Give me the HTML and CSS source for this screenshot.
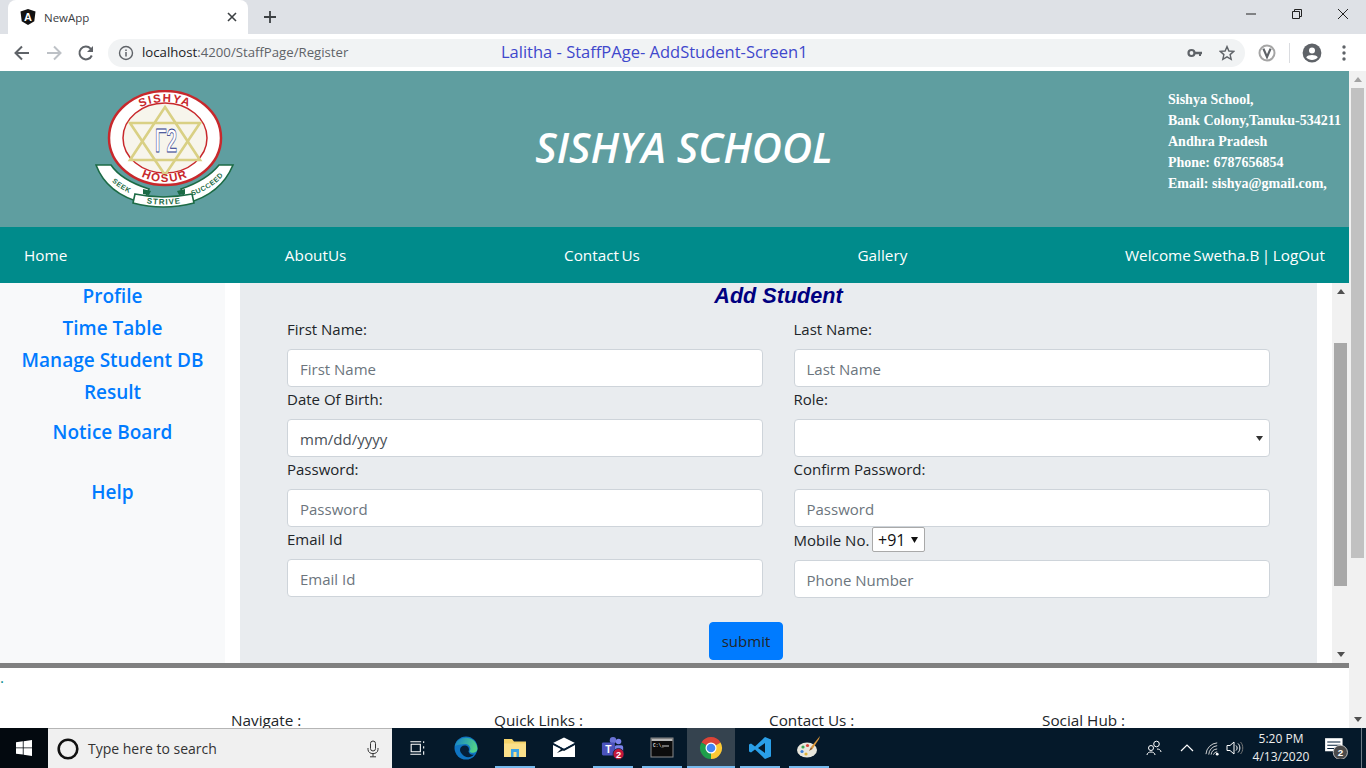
FILE: index.html
```html
<!DOCTYPE html>
<html lang="en">
<head>
<meta charset="utf-8">
<title>NewApp</title>
<link rel="stylesheet" href="styles.css">
</head>
<body>
<div class="tabstrip">
  <div class="tab">
    <svg class="fav" viewBox="0 0 16 16"><path d="M8 0 15.5 2.6 14.3 12.3 8 16 1.7 12.3.5 2.6z" fill="#111"/><text x="8" y="12" text-anchor="middle" class="fav-a">A</text></svg>
    <span class="tab-title">NewApp</span>
    <svg class="tab-x" viewBox="0 0 10 10"><path d="M1 1 9 9M9 1 1 9" stroke="#3c4043" stroke-width="1.6"/></svg>
  </div>
  <svg class="tab-plus" viewBox="0 0 14 14"><path d="M7 1V13M1 7H13" stroke="#3c4043" stroke-width="1.8"/></svg>
  <div class="winctl">
    <svg class="wc" viewBox="0 0 12 12"><path d="M1 6H11" stroke="#222" stroke-width="1"/></svg>
    <svg class="wc" viewBox="0 0 12 12"><path d="M1.5 3.5H8.5V10.5H1.5ZM3.5 3.5V1.5H10.5V8.5H8.5" fill="none" stroke="#222" stroke-width="1"/></svg>
    <svg class="wc" viewBox="0 0 12 12"><path d="M1 1 11 11M11 1 1 11" stroke="#222" stroke-width="1"/></svg>
  </div>
</div>
<div class="toolbar">
  <svg class="tb" viewBox="0 0 20 20"><path d="M17 10H4M10 3.5 3.5 10 10 16.5" fill="none" stroke="#5f6368" stroke-width="2"/></svg>
  <svg class="tb" viewBox="0 0 20 20"><path d="M3 10H16M10 3.5 16.5 10 10 16.5" fill="none" stroke="#bdc1c6" stroke-width="2"/></svg>
  <svg class="tb" viewBox="0 0 20 20"><path d="M15.8 12.5A6.4 6.4 0 1 1 14.6 5.6L16.5 7.5" fill="none" stroke="#5f6368" stroke-width="2"/><path d="M17 3V9H11z" fill="#5f6368"/></svg>
  <div class="omnibox">
    <svg class="om-info" viewBox="0 0 16 16"><circle cx="8" cy="8" r="6.5" fill="none" stroke="#5f6368" stroke-width="1.4"/><path d="M8 7V11.5M8 4.5V6" stroke="#5f6368" stroke-width="1.5"/></svg>
    <div class="url"><span class="url-host">localhost</span>:4200/StaffPage/Register</div>
    <div class="note">Lalitha - StaffPAge- AddStudent-Screen1</div>
    <div class="om-right">
      <svg class="om-icon" viewBox="0 0 16 16"><circle cx="4.5" cy="8" r="3" fill="none" stroke="#5f6368" stroke-width="2.2"/><path d="M7 6.8H15V9.2H14V11H12V9.2H7z" fill="#5f6368"/></svg>
      <svg class="om-icon" viewBox="0 0 16 16"><path d="M8 1.6 9.9 6 14.8 6.4 11.1 9.6 12.2 14.4 8 11.9 3.8 14.4 4.9 9.6 1.2 6.4 6.1 6z" fill="none" stroke="#5f6368" stroke-width="1.4"/></svg>
    </div>
  </div>
  <svg class="tb" viewBox="0 0 20 20"><circle cx="10" cy="10" r="7.5" fill="#fff" stroke="#a5a5a5" stroke-width="2"/><path d="M6.4 5.6 10 14 13.6 5.6" fill="none" stroke="#5f6368" stroke-width="2.2"/></svg>
  <div class="tb-sep"></div>
  <svg class="tb" viewBox="0 0 20 20"><circle cx="10" cy="10" r="9.4" fill="#5f6368"/><circle cx="10" cy="7.6" r="3" fill="#fff"/><path d="M4.2 14.2C6 11.2 14 11.2 15.8 14.2 14.4 16 12.2 17 10 17S5.600 16 4.200 14.200z" fill="#fff"/></svg>
  <svg class="tb" viewBox="0 0 20 20"><circle cx="10" cy="4" r="1.7" fill="#5f6368"/><circle cx="10" cy="10" r="1.7" fill="#5f6368"/><circle cx="10" cy="16" r="1.7" fill="#5f6368"/></svg>
</div>

<div class="viewport">
  <div class="page">
    <header class="site-head">
      <svg class="logo" viewBox="0 0 140 120">
        <defs>
          <path id="arcTop" d="M22 50A48 38 0 0 1 118 50"/>
          <path id="arcBot" d="M22 50A48 42 0 0 0 118 50"/>
          <path id="arcSeek" d="M10 84Q22 100 44 107"/>
          <path id="arcStrive" d="M46 112Q68 117 92 112"/>
          <path id="arcSucceed" d="M93 107Q118 100 131 82"/>
        </defs>
        <ellipse cx="70" cy="48" rx="56" ry="47" fill="#fff" stroke="#c8282c" stroke-width="2.5"/>
        <ellipse cx="70" cy="48" rx="42" ry="35" fill="#f7f5ec" stroke="#c8282c" stroke-width="1.5"/>
        <path d="M70 17 105 70H35z" fill="none" stroke="#d9d084" stroke-width="2.6"/>
        <path d="M70 85 35 33H105z" fill="none" stroke="#d9d084" stroke-width="2.6"/>
        <text x="60" y="62" class="logo-mono" textLength="22" lengthAdjust="spacingAndGlyphs">Γ2</text>
        <text class="logo-ring"><textPath href="#arcTop" startOffset="50%" text-anchor="middle">SISHYA</textPath></text>
        <text class="logo-ring"><textPath href="#arcBot" startOffset="50%" text-anchor="middle">HOSUR</textPath></text>
        <path d="M1 75 16 75Q26 90 54 99L48 113Q12 104 1 75Z" fill="#fff" stroke="#1c6b45" stroke-width="1.6"/>
        <path d="M138 75 124 75Q112 90 86 99L92 113Q126 104 138 75Z" fill="#fff" stroke="#1c6b45" stroke-width="1.6"/>
        <path d="M40 104Q68 110 97 104L99 113Q68 121 38 113Z" fill="#fff" stroke="#1c6b45" stroke-width="1.6"/>
        <path d="M48 99 56 101 54 105 48 104zM90 99 82 101 84 105 90 104z" fill="#1c6b45"/>
        <text class="logo-rib"><textPath href="#arcSeek" startOffset="50%" text-anchor="middle">SEEK</textPath></text>
        <text class="logo-rib logo-mid"><textPath href="#arcStrive" startOffset="50%" text-anchor="middle">STRIVE</textPath></text>
        <text class="logo-rib"><textPath href="#arcSucceed" startOffset="50%" text-anchor="middle">SUCCEED</textPath></text>
      </svg>
      <h1 class="site-title">SISHYA SCHOOL</h1>
      <address class="site-addr">
        <div>Sishya School,</div>
        <div>Bank Colony,Tanuku-534211</div>
        <div>Andhra Pradesh</div>
        <div>Phone: 6787656854</div>
        <div>Email: sishya@gmail.com,</div>
      </address>
    </header>
    <nav class="site-nav">
      <a>Home</a><a>AboutUs</a><a>Contact Us</a><a>Gallery</a><a>Welcome Swetha.B | LogOut</a>
    </nav>
    <div class="content">
      <aside class="sidebar">
        <a>Profile</a><a>Time Table</a><a>Manage Student DB</a><a>Result</a>
        <a class="side-notice">Notice Board</a><a class="side-help">Help</a>
      </aside>
      <div class="pane">
        <form class="panel">
          <h2 class="panel-title">Add Student</h2>
          <div class="grid">
            <div class="field"><label>First Name:</label><input placeholder="First Name"></div>
            <div class="field"><label>Last Name:</label><input placeholder="Last Name"></div>
            <div class="field"><label>Date Of Birth:</label><input value="mm/dd/yyyy"></div>
            <div class="field"><label>Role:</label><select class="role"><option></option></select></div>
            <div class="field"><label>Password:</label><input placeholder="Password"></div>
            <div class="field"><label>Confirm Password:</label><input placeholder="Password"></div>
            <div class="field"><label>Email Id</label><input placeholder="Email Id"></div>
            <div class="field"><div class="mobile"><label>Mobile No.</label><select class="cc"><option>+91</option></select></div><input placeholder="Phone Number"></div>
          </div>
          <div class="actions"><button type="button" class="submit">submit</button></div>
        </form>
      </div>
      <div class="sbar sbar-inner">
        <div class="arrow-btn"><span class="up"></span></div>
        <div class="thumb thumb-inner"></div>
        <div class="arrow-btn arrow-end"><span class="down"></span></div>
      </div>
    </div>
    <div class="rule"></div>
    <footer class="site-foot">
      <div class="dot">.</div>
      <div class="foot-cols"><div>Navigate :</div><div>Quick Links :</div><div>Contact Us :</div><div>Social Hub :</div></div>
    </footer>
  </div>
  <div class="sbar sbar-outer">
    <div class="arrow-btn"><span class="up up-off"></span></div>
    <div class="thumb thumb-outer"></div>
    <div class="arrow-btn arrow-end"><span class="down"></span></div>
  </div>
</div>

<div class="taskbar">
  <div class="start"><svg class="win" viewBox="0 0 16 16"><path d="M0 2.300 6.800 1.300V7.500H0zM7.600 1.200 16 0V7.500H7.600zM0 8.300H6.800V14.600L0 13.700zM7.600 8.300H16V16L7.600 14.800z" fill="#fff"/></svg></div>
  <div class="search">
    <svg class="cortana" viewBox="0 0 22 22"><circle cx="11" cy="11" r="9.300" fill="none" stroke="#111" stroke-width="2.600"/></svg>
    <span class="search-text">Type here to search</span>
    <svg class="mic" viewBox="0 0 14 18"><rect x="4.500" y="1" width="5" height="10" rx="2.500" fill="none" stroke="#333"/><path d="M2 8V9.500C2 15 12 15 12 9.500V8M7 13.500V16.500M4 16.800H10" fill="none" stroke="#333"/></svg>
  </div>
  <div class="tasks">
    <div class="task"><svg class="ti" viewBox="0 0 24 24"><path d="M5 7.500H16V16.500H5zM4 4.500H17M4 19.500H17M20 4V6M20 10V12.500M20 16V20" fill="none" stroke="#fff" stroke-width="1.300"/></svg></div>
    <div class="task"><svg class="ti ti-lg" viewBox="0 0 24 24"><defs><linearGradient id="edgeG" x1="0" y1="0" x2="1" y2="0.300"><stop offset="0" stop-color="#1580c9"/><stop offset="1" stop-color="#4fd08a"/></linearGradient></defs><circle cx="12" cy="12" r="11.500" fill="#0f74c2"/><path d="M1 10C3 -1 22 -2 23.500 12.500 23.500 17 17 18 15.500 15.500 18 12 15 7.500 10.500 8 6 8.500 3 9 1 10Z" fill="url(#edgeG)"/><path d="M6 14C6 10.500 9 9 11.500 9.500 14 10 16 12.500 14.500 15.500 15 18 18 19.500 20 18.500 16 23 10 21 8 18 6.800 16.500 6 15.500 6 14Z" fill="#05203a"/></svg></div>
    <div class="task task-on"><svg class="ti ti-lg" viewBox="0 0 24 24"><path d="M1 3H9L11 5.500H23V21H1Z" fill="#f5d36a"/><path d="M1 7.500H23V21H1Z" fill="#fbe08a"/><path d="M8 13H16V21H13.500V16H10.500V21H8Z" fill="#3aa4e6"/></svg></div>
    <div class="task"><svg class="ti ti-lg" viewBox="0 0 24 24"><path d="M1 7 12 1.500 23 7 12 13 1 7Z" fill="#fff"/><path d="M1 9 9 13 5 17 11 14.500 12 15 23 9V21H1Z" fill="#fff"/><path d="M1 7.500 12 13.500 23 7.500" fill="none" stroke="#05203a" stroke-width="1.200"/></svg></div>
    <div class="task task-on"><svg class="ti ti-lg" viewBox="0 0 26 26"><circle cx="19" cy="6" r="3" fill="#7b83eb"/><circle cx="13" cy="4.500" r="3.500" fill="#6b73d6"/><rect x="15" y="10" width="9" height="10" rx="2" fill="#7b83eb"/><rect x="1" y="7" width="14" height="14" rx="1.500" fill="#4b53bc"/><text x="8" y="18" text-anchor="middle" class="teams-t">T</text><circle cx="19" cy="19.500" r="6" fill="#c4173a" stroke="#05203a" stroke-width="0.800"/><text x="19" y="23.500" text-anchor="middle" class="teams-n">2</text></svg></div>
    <div class="task task-on"><svg class="ti ti-lg" viewBox="0 0 24 24"><rect x="1" y="2" width="22" height="19" fill="#0c0c0c" stroke="#8a8a8a"/><rect x="1.500" y="2.500" width="21" height="2.500" fill="#b8b8b8"/><text x="3" y="11" class="cmd-t">C:\_</text><path d="M12 10H19" stroke="#ccc"/></svg></div>
    <div class="task task-on task-active"><svg class="ti ti-lg" viewBox="0 0 24 24"><path d="M12 12 2.470 6.500A11 11 0 0 1 21.530 6.500Z" fill="#db4437"/><path d="M12 12 21.530 6.500A11 11 0 0 1 12 23Z" fill="#fcc934"/><path d="M12 12 12 23A11 11 0 0 1 2.470 6.500Z" fill="#1e9e4a"/><circle cx="12" cy="12" r="5.500" fill="#fff"/><circle cx="12" cy="12" r="4.300" fill="#4285f4"/></svg></div>
    <div class="task task-on"><svg class="ti ti-lg" viewBox="0 0 24 24"><path d="M17 1 7 10.500 3 7.500 1 8.500V15.500L3 16.500 7 13.500 17 23 23 20.500V3.500ZM17 7V17L10 12Z" fill="#2a9fe8" fill-rule="evenodd"/></svg></div>
    <div class="task task-on"><svg class="ti ti-lg" viewBox="0 0 24 24"><ellipse cx="10" cy="14" rx="10" ry="7.500" fill="#e8e6dc"/><circle cx="6" cy="11" r="1.600" fill="#3aa655"/><circle cx="10.500" cy="9.500" r="1.600" fill="#d9453a"/><circle cx="5" cy="15.500" r="1.600" fill="#3a7fd9"/><circle cx="9" cy="18" r="1.600" fill="#e0b23a"/><path d="M23 0 14 11 15.500 13 22 3Z" fill="#d9963a"/><path d="M14 11 12 15 15.500 13Z" fill="#8a5a2a"/></svg></div>
  </div>
  <div class="tray">
    <svg class="tr tr-people" viewBox="0 0 16 16"><circle cx="10.500" cy="4" r="2.800" fill="none" stroke="#fff"/><circle cx="5" cy="8" r="2.500" fill="none" stroke="#fff"/><path d="M1 15C1 11 9 11 9 15M11 9C13 9 15 10 15 12" fill="none" stroke="#fff"/></svg>
    <svg class="tr tr-caret" viewBox="0 0 14 10"><path d="M1 8 7 2 13 8" fill="none" stroke="#fff" stroke-width="1.200"/></svg>
    <svg class="tr tr-wifi" viewBox="0 0 16 16"><path d="M1 14A13 13 0 0 1 13 2M4 14.500A10 10 0 0 1 13 5M6.500 14.500A7 7 0 0 1 13 8.500M9 14.500A4.500 4.500 0 0 1 13 11.500" fill="none" stroke="#ddd"/><circle cx="13" cy="14" r="1.500" fill="#fff"/></svg>
    <svg class="tr tr-vol" viewBox="0 0 18 16"><path d="M1 5.500H4L8 2V14L4 10.500H1Z" fill="none" stroke="#fff"/><path d="M10 5.500C11.500 7 11.500 9 10 10.500M12 3.500C14.500 6 14.500 10 12 12.500" fill="none" stroke="#fff"/><path d="M14.500 2C17.500 5 17.500 11 14.500 14" fill="none" stroke="#777"/></svg>
    <div class="clock"><div>5:20 PM</div><div>4/13/2020</div></div>
    <div class="notif">
      <svg class="notif-ico" viewBox="0 0 22 20"><path d="M1 1H17V13H8L1 13Z" fill="#fff"/><path d="M3 4.500H15M3 7.500H15M3 10.500H11" stroke="#05203a"/><circle cx="15" cy="14" r="6.500" fill="#4a4a4a" stroke="#ccc" stroke-width="0.800"/><text x="15" y="17.500" text-anchor="middle" class="notif-n">2</text></svg>
    </div>
    <div class="desk-edge"></div>
  </div>
</div>
</body>
</html>
```
FILE: styles.css
```css
* { box-sizing: border-box; }
html, body { margin: 0; height: 768px; overflow: hidden; }
body { display: flex; flex-direction: column; width: 1366px; font-family: "Open Sans", "Noto Sans", sans-serif; color: #212529; }

/* browser chrome */
.tabstrip { height: 34px; background: #dee1e6; display: flex; align-items: flex-end; padding-left: 8px; flex: none; }
.tab { width: 240px; height: 34px; background: #fff; border-radius: 8px 8px 0 0; display: flex; align-items: center; padding: 0 11px 0 12px; }
.fav { width: 16px; height: 16px; flex: none; }
.fav-a { font: 700 11px "Liberation Sans", sans-serif; fill: #fff; }
.tab-title { font-size: 11.500px; color: #3c4043; margin-left: 8px; flex: 1; }
.tab-x { width: 10px; height: 10px; }
.tab-plus { width: 14px; height: 14px; margin: 0 0 10px 15px; }
.winctl { margin-left: auto; display: flex; align-self: stretch; padding: 8px 17px 0 0; gap: 34px; }
.wc { width: 12px; height: 12px; }

.toolbar { height: 37px; background: #fff; display: flex; align-items: center; gap: 12px; padding: 0 12px; flex: none; }
.tb { width: 20px; height: 20px; flex: none; }
.tb-sep { width: 1px; height: 20px; background: #dadce0; flex: none; }
.omnibox { width: 1137px; height: 28px; background: #f1f3f4; border-radius: 14px; display: flex; align-items: center; padding: 0 10px; flex: none; }
.om-info { width: 16px; height: 16px; flex: none; }
.url { width: 359px; margin: 0 0 2px 8px; font-size: 13.200px; color: #5f6368; white-space: nowrap; flex: none; }
.url-host { color: #202124; }
.note { font-size: 16.500px; margin-bottom: 2px; color: #3f48cc; white-space: nowrap; }
.om-right { margin-left: auto; display: flex; gap: 16px; }
.om-icon { width: 16px; height: 16px; }

/* page */
.viewport { flex: none; height: 657px; display: flex; }
.page { width: 1349px; display: flex; flex-direction: column; overflow: hidden; }
.site-head { height: 156px; background: #5f9ea0; display: grid; grid-template-columns: 340px 688px 321px; flex: none; }
.logo { width: 140px; height: 120px; margin: 19px 0 0 95px; }
.logo-ring { font: 700 11.500px "Liberation Sans", sans-serif; fill: #c8282c; letter-spacing: 1.500px; }
.logo-mono { font: 700 34px "Liberation Sans", sans-serif; fill: #fff; stroke: #2b3a8c; stroke-width: .8; }
.logo-rib { font: 700 7px "Liberation Sans", sans-serif; fill: #1c6b45; letter-spacing: .6px; }
.logo-mid { font-size: 8px; letter-spacing: 1px; }
.site-title { margin: 48px 0 0; font-size: 41.500px; line-height: 56px; font-style: italic; font-weight: 600; color: #fff; text-align: center; white-space: nowrap; }
.site-addr { width: 181px; justify-self: end; padding-top: 18px; font: 700 14px/21px "Liberation Serif", serif; color: #fff; white-space: nowrap; }

.site-nav { height: 56px; background: #008b8b; display: flex; justify-content: space-between; align-items: center; padding: 0 24px; color: #fff; font-size: 15.300px; word-spacing: -1.500px; flex: none; }

.content { height: 380px; display: flex; flex: none; }
.sidebar { width: 225px; background: #f8f9fa; display: flex; flex-direction: column; align-items: center; gap: 6px; font-size: 19px; font-weight: 600; line-height: 26px; color: #007bff; flex: none; }
.side-notice { margin-top: 8px; }
.side-help { margin-top: 28px; }
.pane { flex: 1; padding: 0 15px; background: #fff; min-width: 0; }
.panel { height: 380px; background: #e9ecef; padding: 0 47px; }
.panel-title { margin: 0; height: 34px; font: italic 700 21.600px/26px "Liberation Sans", sans-serif; color: #000080; text-align: center; }
.grid { display: grid; grid-template-columns: 476px 476.500px; column-gap: 30.500px; }
.field label { display: block; font-size: 15px; line-height: 24px; height: 24px; margin-bottom: 8px; }
.field input, .role { display: block; width: 100%; height: 38px; border: 1px solid #ced4da; border-radius: 4px; background: #fff; padding: 7px 12px 5px; font: 15px "Open Sans", sans-serif; color: #495057; }
.field input::placeholder { color: #6c757d; opacity: 1; }
.role { appearance: none; background: #fff url("data:image/svg+xml,%3Csvg xmlns='http://www.w3.org/2000/svg' width='7' height='5'%3E%3Cpath d='M0 0H7L3.500 5Z' fill='%23333'/%3E%3C/svg%3E") no-repeat right 6px center; }
.mobile { display: flex; height: 25px; margin-bottom: 8px; align-items: flex-start; }
.mobile label { margin: 0; width: 78.500px; line-height: 27px; white-space: nowrap; }
.cc { appearance: none; width: 53px; height: 25px; font: 16px "Open Sans", sans-serif; background: #fff url("data:image/svg+xml,%3Csvg xmlns='http://www.w3.org/2000/svg' width='7' height='6'%3E%3Cpath d='M0 0H7L3.500 6Z' fill='%23111'/%3E%3C/svg%3E") no-repeat right 6px top 9px; border: 1px solid #a9a9a9; border-radius: 2px; padding: 0 0 0 5px; color: #111; }
.actions { display: flex; margin-top: 24px; padding-left: 422px; }
.submit { width: 74px; height: 38px; background: #007bff; border: 1px solid #007bff; border-radius: 4px; font: 15px "Open Sans", sans-serif; color: #212529; padding: 0; }

/* scrollbars */
.sbar { width: 17px; background: #f1f1f1; display: flex; flex-direction: column; align-items: center; flex: none; }
.arrow-btn { height: 17px; width: 17px; display: flex; align-items: center; justify-content: center; flex: none; }
.arrow-end { margin-top: auto; }
.up { width: 0; height: 0; border: 4.500px solid transparent; border-top: 0; border-bottom: 5px solid #505050; }
.up-off { border-bottom-color: #a3a3a3; }
.down { width: 0; height: 0; border: 4.500px solid transparent; border-bottom: 0; border-top: 5px solid #505050; }
.thumb { width: 13px; flex: none; }
.thumb-inner { background: #a8a8a8; margin-top: 43px; height: 243px; }
.thumb-outer { background: #c1c1c1; height: 470px; }

/* footer */
.rule { height: 5px; background: #808080; flex: none; }
.site-foot { flex: 1; background: #fff; overflow: hidden; font-size: 15.300px; line-height: 24px; }
.dot { height: 40px; line-height: 18px; color: #008b8b; }
.foot-cols { display: grid; grid-template-columns: 263px 275px 273px 200px; padding-left: 231px; white-space: nowrap; }

/* taskbar */
.taskbar { height: 40px; background: #05192a; display: flex; flex: none; color: #fff; }
.start { width: 48px; background: #03090f; display: flex; align-items: center; justify-content: center; }
.win { width: 16px; height: 16px; }
.search { width: 344px; background: #f0f0f0; border-top: 1px solid #b5b5b5; display: flex; align-items: center; padding: 0 12px 0 9px; }
.cortana { width: 22px; height: 22px; flex: none; }
.search-text { margin-left: 9px; font-size: 14px; color: #333; flex: 1; }
.mic { width: 14px; height: 18px; }
.tasks { display: flex; gap: 1px; padding-left: 1px; }
.task { width: 48px; height: 40px; display: flex; align-items: center; justify-content: center; }
.task-on { background: linear-gradient(#76b9ed, #76b9ed) center bottom / 40px 2px no-repeat; }
.task-active { background: linear-gradient(#76b9ed, #76b9ed) center bottom / 48px 2px no-repeat, #35434f; }
.ti { width: 20px; height: 20px; }
.ti-lg { width: 24px; height: 24px; }
.teams-t { font: 700 11px "Liberation Sans", sans-serif; fill: #fff; }
.teams-n { font: 700 10px "Liberation Sans", sans-serif; fill: #fff; }
.cmd-t { font: 700 4.500px "Liberation Mono", monospace; fill: #ddd; }
.tray { margin-left: auto; display: flex; align-items: center; }
.tr { flex: none; }
.tr-people { width: 16px; height: 16px; margin-right: 18px; }
.tr-caret { width: 14px; height: 10px; margin-right: 11px; }
.tr-wifi { width: 15px; height: 15px; margin-right: 6px; }
.tr-vol { width: 18px; height: 16px; }
.clock { width: 74px; margin-right: 3px; font-size: 12px; line-height: 18px; text-align: center; color: #eee; }
.notif { width: 40px; display: flex; justify-content: center; padding-right: 10px; }
.notif-ico { width: 24px; height: 22px; }
.notif-n { font: 700 9px "Liberation Sans", sans-serif; fill: #fff; }
.desk-edge { width: 1px; height: 40px; background: #6d7a85; margin-right: 4px; }
```
